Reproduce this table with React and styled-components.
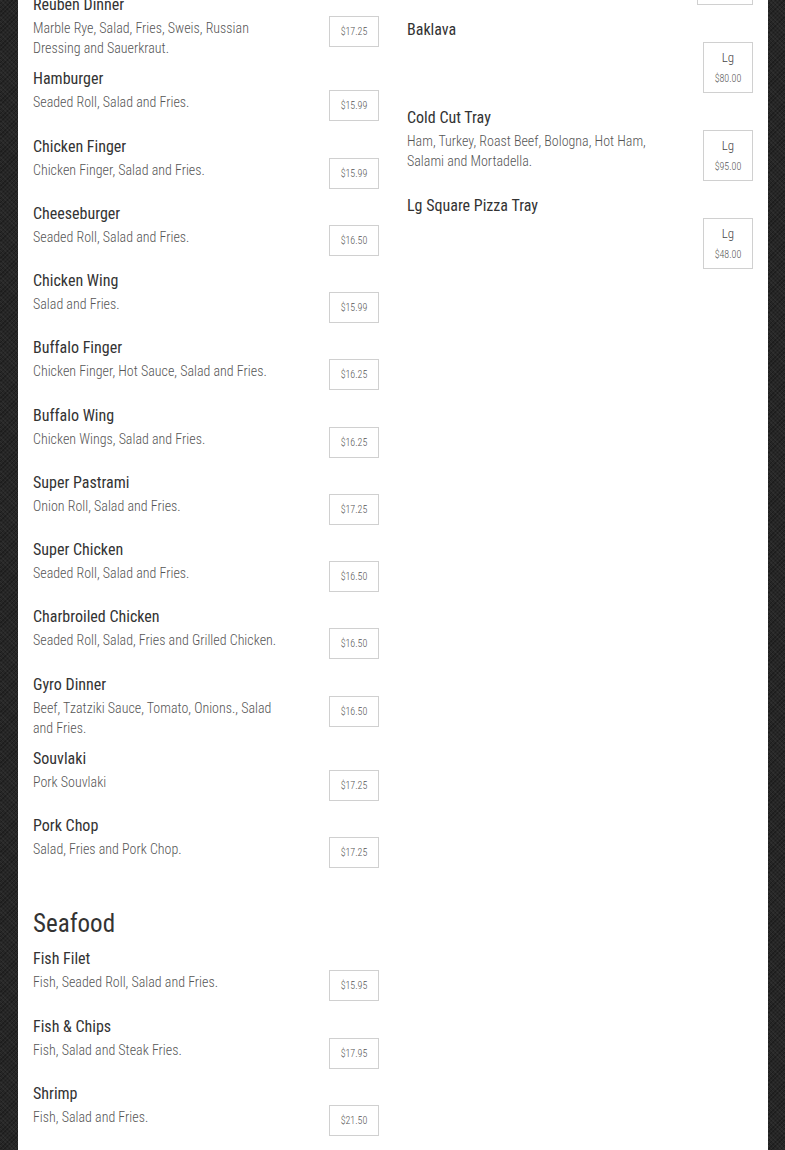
import React from "react"
import styled, { createGlobalStyle } from "styled-components"

const GlobalStyle = createGlobalStyle`
  html, body {
    margin: 0;
    padding: 0;
  }
  body {
    background-color: #262626;
    background-image:
      repeating-linear-gradient(45deg, rgba(255,255,255,0.04) 0 1px, transparent 1px 3px),
      repeating-linear-gradient(-45deg, rgba(0,0,0,0.25) 0 1px, transparent 1px 3px);
    font-family: "Roboto Condensed", "Roboto", sans-serif;
    font-stretch: condensed;
    height: 1150px;
    overflow: hidden;
  }
`

const Page = styled.div`
  width: 750px;
  margin-left: 18px;
  background: #fff;
  min-height: 1150px;
  box-sizing: border-box;
  padding: 0 15px;
  display: grid;
  grid-template-columns: 346px 346px;
  column-gap: 28px;
  align-items: start;
`

const Column = styled.div`
  display: flex;
  flex-direction: column;
  margin-top: ${p => p.$offset || 0}px;
`

const Item = styled.div`
  margin-bottom: ${p => (p.$sized ? 14 : 12.25)}px;
`

const Title = styled.div`
  font-size: 16px;
  line-height: 22px;
  color: #333;
  font-weight: 400;
`

const Body = styled.div`
  display: flex;
  justify-content: space-between;
  align-items: flex-start;
  min-height: ${p => (p.$sized ? 52 : 33)}px;
`

const Desc = styled.div`
  width: 255px;
  font-size: 14px;
  line-height: 20px;
  color: #555;
  font-weight: 300;
  padding-top: 2px;
  margin-bottom: -2px;
`

const PriceBox = styled.div`
  width: 50px;
  height: 31px;
  box-sizing: border-box;
  border: 1px solid #d0d0d0;
  display: flex;
  align-items: center;
  justify-content: center;
  font-size: 10px;
  color: #555;
  font-weight: 300;
`

const SizeBox = styled.div`
  width: 50px;
  height: 51px;
  margin-top: 1px;
  box-sizing: border-box;
  border: 1px solid #d0d0d0;
  display: flex;
  flex-direction: column;
  align-items: center;
  justify-content: center;
  gap: 8px;
`

const SizeLabel = styled.span`
  font-size: 13px;
  line-height: 14px;
  color: #444;
  font-weight: 300;
`

const SizePrice = styled.span`
  font-size: 10px;
  line-height: 12px;
  color: #555;
  font-weight: 300;
`

const TailBox = styled.div`
  align-self: flex-end;
  width: 56px;
  height: 20px;
  margin-top: -15px;
  margin-bottom: 14px;
  box-sizing: border-box;
  border: 1px solid #d0d0d0;
`

const Heading = styled.h2`
  margin: 27px 0 9px;
  font-size: 25px;
  line-height: 30px;
  font-weight: 400;
  color: #333;
`

const entrees = [
  ["Reuben Dinner", "Marble Rye, Salad, Fries, Sweis, Russian Dressing and Sauerkraut.", "$17.25"],
  ["Hamburger", "Seaded Roll, Salad and Fries.", "$15.99"],
  ["Chicken Finger", "Chicken Finger, Salad and Fries.", "$15.99"],
  ["Cheeseburger", "Seaded Roll, Salad and Fries.", "$16.50"],
  ["Chicken Wing", "Salad and Fries.", "$15.99"],
  ["Buffalo Finger", "Chicken Finger, Hot Sauce, Salad and Fries.", "$16.25"],
  ["Buffalo Wing", "Chicken Wings, Salad and Fries.", "$16.25"],
  ["Super Pastrami", "Onion Roll, Salad and Fries.", "$17.25"],
  ["Super Chicken", "Seaded Roll, Salad and Fries.", "$16.50"],
  ["Charbroiled Chicken", "Seaded Roll, Salad, Fries and Grilled Chicken.", "$16.50"],
  ["Gyro Dinner", "Beef, Tzatziki Sauce, Tomato, Onions., Salad and Fries.", "$16.50"],
  ["Souvlaki", "Pork Souvlaki", "$17.25"],
  ["Pork Chop", "Salad, Fries and Pork Chop.", "$17.25"],
]

const seafood = [
  ["Fish Filet", "Fish, Seaded Roll, Salad and Fries.", "$15.95"],
  ["Fish & Chips", "Fish, Salad and Steak Fries.", "$17.95"],
  ["Shrimp", "Fish, Salad and Fries.", "$21.50"],
  ["Shrimp Dinner", "", ""],
]

const trays = [
  ["Baklava", "", "Lg", "$80.00"],
  ["Cold Cut Tray", "Ham, Turkey, Roast Beef, Bologna, Hot Ham, Salami and Mortadella.", "Lg", "$95.00"],
  ["Lg Square Pizza Tray", "", "Lg", "$48.00"],
]

const MenuItem = ({ name, desc, price }) => (
  <Item>
    <Title>{name}</Title>
    <Body>
      <Desc>{desc}</Desc>
      {price && <PriceBox>{price}</PriceBox>}
    </Body>
  </Item>
)

const TrayItem = ({ name, desc, size, price }) => (
  <Item $sized>
    <Title>{name}</Title>
    <Body $sized>
      <Desc>{desc}</Desc>
      <SizeBox>
        <SizeLabel>{size}</SizeLabel>
        <SizePrice>{price}</SizePrice>
      </SizeBox>
    </Body>
  </Item>
)

export default function App() {
  return (
    <>
      <GlobalStyle />
      <Page>
        <Column $offset={-6}>
          {entrees.map(([name, desc, price]) => (
            <MenuItem key={name} name={name} desc={desc} price={price} />
          ))}
          <Heading>Seafood</Heading>
          {seafood.map(([name, desc, price]) => (
            <MenuItem key={name} name={name} desc={desc} price={price} />
          ))}
        </Column>
        <Column>
          <TailBox />
          {trays.map(([name, desc, size, price]) => (
            <TrayItem key={name} name={name} desc={desc} size={size} price={price} />
          ))}
        </Column>
      </Page>
    </>
  )
}
